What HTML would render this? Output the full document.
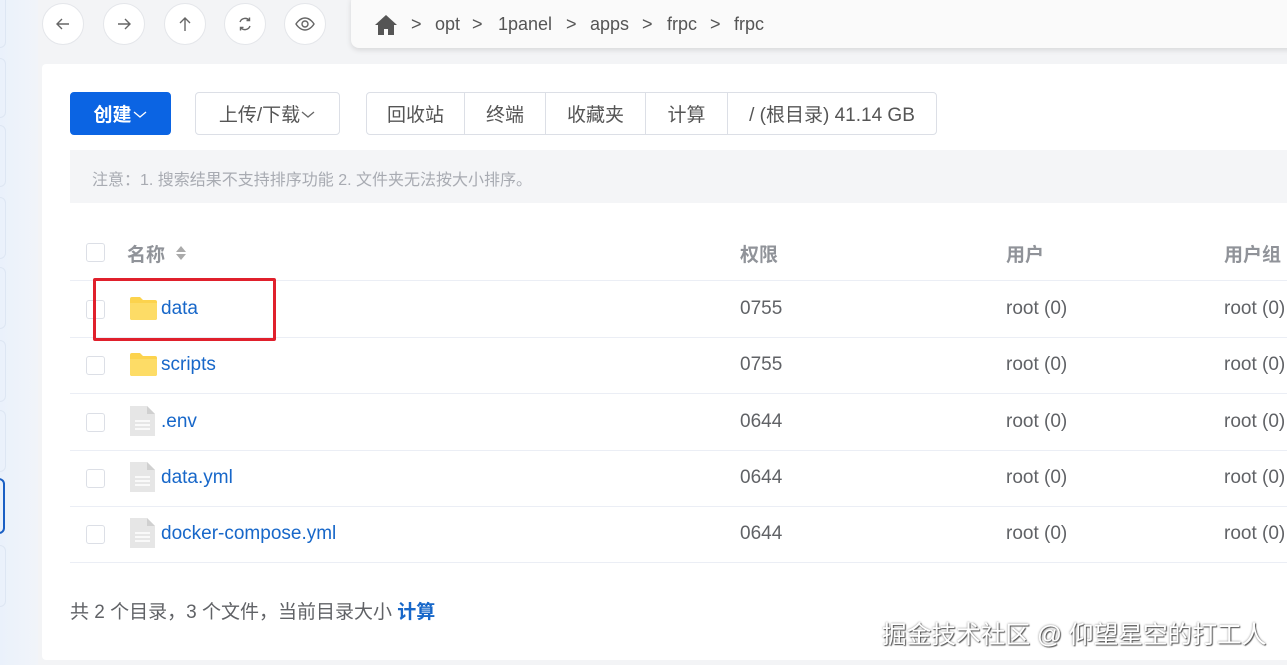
<!DOCTYPE html>
<html><head><meta charset="utf-8"><style>
*{margin:0;padding:0;box-sizing:border-box}
body{width:1287px;height:665px;overflow:hidden;background:#f3f4f6;font-family:"Liberation Sans","Noto Sans CJK SC",sans-serif;position:relative;color:#333}
.side{position:absolute;left:0;top:0;width:38px;height:665px;background:linear-gradient(90deg,#eaf1fb,#f1f4f9)}
.side div{position:absolute;left:-6px;width:12px;border:1px solid #dde6f3;border-radius:6px}
.circ{position:absolute;top:3px;width:42px;height:42px;border-radius:50%;background:#fff;border:1px solid #e4e6ea;display:flex;align-items:center;justify-content:center}
.bc{position:absolute;left:351px;top:-6px;width:960px;height:54px;background:#fafafa;border-radius:8px;box-shadow:0 2px 6px rgba(0,0,0,.12);font-size:18px;color:#555}
.bc span{position:absolute;top:20px}
.card{position:absolute;left:42px;top:64px;width:1260px;height:596px;background:#fff;border-radius:4px}
.btn{position:absolute;top:92px;height:43px;border:1px solid #dcdfe6;border-radius:4px;font-size:19px;color:#555;display:flex;align-items:center;justify-content:center;background:#fff}
.grp{position:absolute;top:92px;left:366px;height:43px;border:1px solid #dcdfe6;border-radius:4px;display:flex;font-size:19px;color:#555;background:#fff}
.grp span{display:flex;align-items:center;justify-content:center;border-right:1px solid #dcdfe6;height:100%}
.grp span:last-child{border:none}
.note{position:absolute;left:70px;top:150px;width:1230px;height:53px;background:#f4f5f7;font-size:16px;color:#a8abb2;padding:16px 0 0 22px}
.row{position:absolute;left:70px;width:1230px;border-bottom:1px solid #ebeef5;height:57px;font-size:19px;color:#606266}
.row .cb{position:absolute;left:16px;top:19px;width:19px;height:19px;border:1px solid #dcdfe6;border-radius:3px;background:#fff}
.row .nm{position:absolute;left:91px;top:17px;color:#1767c9}
.row .ic{position:absolute;left:60px;top:15px}
.row .c1{position:absolute;left:670px;top:17px}
.row .c2{position:absolute;left:936px;top:17px}
.row .c3{position:absolute;left:1154px;top:17px}
</style></head><body>
<div class="side">
<div style="top:-10px;height:58px"></div><div style="top:58px;height:60px"></div><div style="top:125px;height:62px"></div><div style="top:197px;height:62px"></div><div style="top:267px;height:62px"></div><div style="top:340px;height:62px"></div><div style="top:410px;height:62px"></div>
<div style="top:478px;height:56px;border:2px solid #1a5fc4;left:-8px;width:13px"></div>
<div style="top:545px;height:62px"></div>
</div>
<div class="circ" style="left:42px"><svg width="18" height="18" viewBox="0 0 18 18" fill="none" stroke="#666" stroke-width="1.4"><path d="M15 9H3M8 4L3 9l5 5"/></svg></div>
<div class="circ" style="left:103px"><svg width="18" height="18" viewBox="0 0 18 18" fill="none" stroke="#666" stroke-width="1.4"><path d="M3 9h12M10 4l5 5-5 5"/></svg></div>
<div class="circ" style="left:164px"><svg width="18" height="18" viewBox="0 0 18 18" fill="none" stroke="#666" stroke-width="1.4"><path d="M9 16V3M4 8l5-5 5 5"/></svg></div>
<div class="circ" style="left:224px"><svg width="18" height="18" viewBox="0 0 18 18" fill="none" stroke="#666" stroke-width="1.4"><path d="M4 7a5.5 5.5 0 0 1 9.5-1.5M14 11a5.5 5.5 0 0 1-9.5 1.5M13.5 2.5v3h-3M4.5 15.5v-3h3"/></svg></div>
<div class="circ" style="left:284px"><svg width="20" height="16" viewBox="0 0 20 16" fill="none" stroke="#666" stroke-width="1.4"><path d="M1 8s3.5-6 9-6 9 6 9 6-3.5 6-9 6-9-6-9-6z"/><circle cx="10" cy="8" r="3"/></svg></div>
<div class="bc"><svg style="position:absolute;left:24px;top:21px" width="22" height="20" viewBox="0 0 22 20"><path d="M11 0L0 10h3v10h6v-6h4v6h6V10h3z" fill="#555"/></svg>
<span style="left:60px">&gt;</span><span style="left:84px">opt</span><span style="left:121px">&gt;</span><span style="left:147px">1panel</span><span style="left:215px">&gt;</span><span style="left:239px">apps</span><span style="left:291px">&gt;</span><span style="left:316px">frpc</span><span style="left:359px">&gt;</span><span style="left:383px">frpc</span></div>
<div class="card"></div>
<div class="btn" style="left:70px;width:101px;background:#0b64e3;border-color:#0b64e3;color:#fff;font-weight:bold">创建<svg width="16" height="10" viewBox="0 0 16 10" fill="none" stroke="#fff" stroke-width="1.3"><path d="M2 3l6 5 6-5"/></svg></div>
<div class="btn" style="left:195px;width:145px">上传/下载<svg width="16" height="10" viewBox="0 0 16 10" fill="none" stroke="#666" stroke-width="1.3"><path d="M2 3l6 5 6-5"/></svg></div>
<div class="grp"><span style="width:98px">回收站</span><span style="width:81px">终端</span><span style="width:100px">收藏夹</span><span style="width:82px">计算</span><span style="width:208px">/ (根目录) 41.14 GB</span></div>
<div class="note">注意：1. 搜索结果不支持排序功能 2. 文件夹无法按大小排序。</div>
<div class="row" style="top:224px;font-weight:bold;color:#909399">
<div class="cb" style="top:19px"></div><span style="position:absolute;left:57px;top:16px">名称</span>
<svg style="position:absolute;left:105px;top:20px" width="12" height="18" viewBox="0 0 12 18"><path d="M6 2l5 6H1zM6 16l5-6H1z" fill="#aaa"/></svg>
<span class="c1" style="top:16px">权限</span><span class="c2" style="top:16px">用户</span><span class="c3" style="top:16px">用户组</span></div>
<div class="row" style="top:281px"><div class="cb"></div><svg class="ic" width="27" height="24" viewBox="0 0 27 24"><path d="M0 3a2 2 0 0 1 2-2h8l3 3h12a2 2 0 0 1 2 2v16a2 2 0 0 1-2 2H2a2 2 0 0 1-2-2z" fill="#fcd34d"/><path d="M0 7h27v15a2 2 0 0 1-2 2H2a2 2 0 0 1-2-2z" fill="#fddc66"/></svg><span class="nm">data</span><span class="c1">0755</span><span class="c2">root (0)</span><span class="c3">root (0)</span></div>
<div class="row" style="top:337px"><div class="cb"></div><svg class="ic" width="27" height="24" viewBox="0 0 27 24"><path d="M0 3a2 2 0 0 1 2-2h8l3 3h12a2 2 0 0 1 2 2v16a2 2 0 0 1-2 2H2a2 2 0 0 1-2-2z" fill="#fcd34d"/><path d="M0 7h27v15a2 2 0 0 1-2 2H2a2 2 0 0 1-2-2z" fill="#fddc66"/></svg><span class="nm">scripts</span><span class="c1">0755</span><span class="c2">root (0)</span><span class="c3">root (0)</span></div>
<div class="row" style="top:394px"><div class="cb"></div><svg class="ic" style="top:12px" width="25" height="30" viewBox="0 0 25 30"><path d="M0 0h17l8 8v22H0z" fill="#e6e6e6"/><path d="M17 0v8h8" fill="#d0d0d0"/><path d="M5 15h15M5 19h15M5 23h15" stroke="#fff" stroke-width="1.5"/></svg><span class="nm">.env</span><span class="c1">0644</span><span class="c2">root (0)</span><span class="c3">root (0)</span></div>
<div class="row" style="top:450px"><div class="cb"></div><svg class="ic" style="top:12px" width="25" height="30" viewBox="0 0 25 30"><path d="M0 0h17l8 8v22H0z" fill="#e6e6e6"/><path d="M17 0v8h8" fill="#d0d0d0"/><path d="M5 15h15M5 19h15M5 23h15" stroke="#fff" stroke-width="1.5"/></svg><span class="nm">data.yml</span><span class="c1">0644</span><span class="c2">root (0)</span><span class="c3">root (0)</span></div>
<div class="row" style="top:506px"><div class="cb"></div><svg class="ic" style="top:12px" width="25" height="30" viewBox="0 0 25 30"><path d="M0 0h17l8 8v22H0z" fill="#e6e6e6"/><path d="M17 0v8h8" fill="#d0d0d0"/><path d="M5 15h15M5 19h15M5 23h15" stroke="#fff" stroke-width="1.5"/></svg><span class="nm">docker-compose.yml</span><span class="c1">0644</span><span class="c2">root (0)</span><span class="c3">root (0)</span></div>
<div style="position:absolute;left:93px;top:278px;width:183px;height:63px;border:3px solid #e0202c;border-radius:2px"></div>
<div style="position:absolute;left:70px;top:597px;font-size:19px;color:#606266">共 2 个目录，3 个文件，当前目录大小 <b style="color:#1767c9">计算</b></div>
<div style="position:absolute;left:882px;top:615px;font-size:24.7px;color:#fff;text-shadow:1px 1px 1px #555,0 0 2px #888">掘金技术社区 @ 仰望星空的打工人</div>
</body></html>
